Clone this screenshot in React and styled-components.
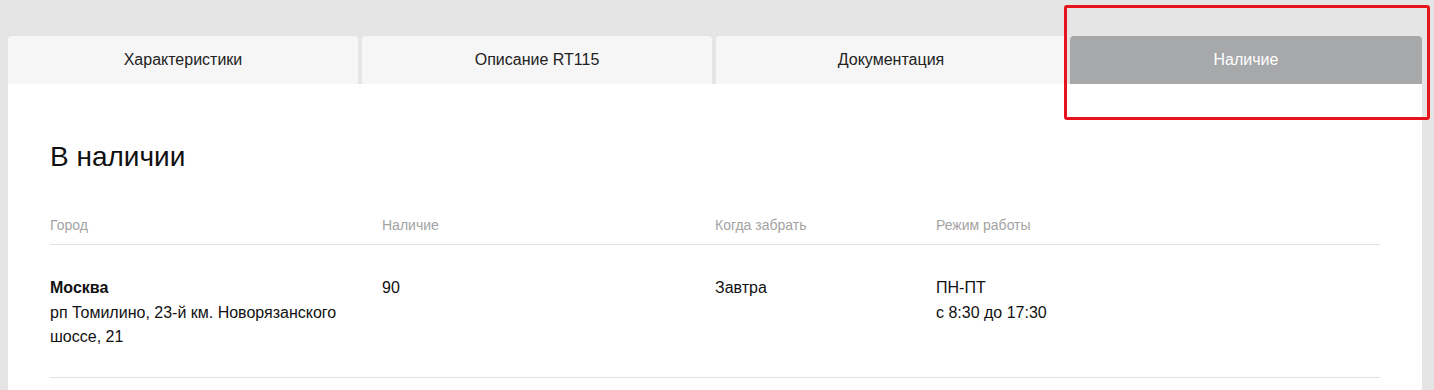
import React from "react";
import styled, { createGlobalStyle } from "styled-components";

const Global = createGlobalStyle`
  html, body { margin: 0; padding: 0; background: #e5e5e5; }
  body { font-family: "Liberation Sans", Arial, sans-serif; color: #111; }
`;

const Page = styled.div`
  position: relative;
  padding: 36px 12px 0 8px;
  min-height: 390px;
  box-sizing: border-box;
`;

const Tabs = styled.div`
  display: grid;
  grid-template-columns: 350px 350px 350px 352px;
  gap: 4px;
`;

const Tab = styled.div`
  height: 48px;
  display: flex;
  align-items: center;
  justify-content: center;
  border-radius: 4px 4px 0 0;
  font-size: 16px;
  background: ${(p) => (p.$active ? "#a7a8aa" : "#f6f6f6")};
  color: ${(p) => (p.$active ? "#ffffff" : "#222222")};
`;

const Panel = styled.div`
  background: #ffffff;
  padding: 58px 42px 40px 42px;
`;

const Heading = styled.h2`
  margin: 0;
  font-size: 28px;
  line-height: 30px;
  font-weight: 400;
  color: #111;
`;

const Table = styled.div`
  margin-top: 43px;
`;

const Row = styled.div`
  display: grid;
  grid-template-columns: 332px 333px 221px 1fr;
  border-bottom: 1px solid #e3e3e3;
  padding: ${(p) => (p.$head ? "0 0 9px" : "31px 0 27px")};
`;

const HeadCell = styled.div`
  font-size: 14px;
  line-height: 20px;
  color: #a3a3a3;
`;

const Cell = styled.div`
  font-size: 16px;
  line-height: 24.5px;
  color: #111;
`;

const City = styled.div`
  font-weight: 700;
`;

const Highlight = styled.div`
  position: absolute;
  left: 1064px;
  top: 5px;
  width: 366px;
  height: 115px;
  box-sizing: border-box;
  border: 3px solid #e8141b;
  border-radius: 3px;
  pointer-events: none;
`;

export default function App() {
  return (
    <>
      <Global />
      <Page>
        <Tabs>
          <Tab>Характеристики</Tab>
          <Tab>Описание RT115</Tab>
          <Tab>Документация</Tab>
          <Tab $active>Наличие</Tab>
        </Tabs>
        <Panel>
          <Heading>В наличии</Heading>
          <Table>
            <Row $head>
              <HeadCell>Город</HeadCell>
              <HeadCell>Наличие</HeadCell>
              <HeadCell>Когда забрать</HeadCell>
              <HeadCell>Режим работы</HeadCell>
            </Row>
            <Row>
              <Cell>
                <City>Москва</City>
                <div>рп Томилино, 23-й км. Новорязанского шоссе, 21</div>
              </Cell>
              <Cell>90</Cell>
              <Cell>Завтра</Cell>
              <Cell>
                <div>ПН-ПТ</div>
                <div>с 8:30 до 17:30</div>
              </Cell>
            </Row>
          </Table>
        </Panel>
        <Highlight />
      </Page>
    </>
  );
}
